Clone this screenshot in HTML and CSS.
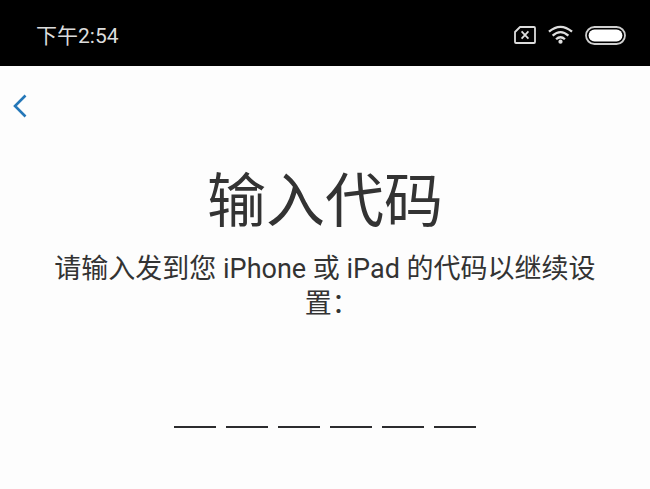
FILE: index.html
```html
<!DOCTYPE html>
<html lang="zh-CN">
<head>
    <meta charset="UTF-8"/>
    <meta name="viewport" content="width=device-width, initial-scale=1.0"/>
    <title>输入代码</title>
    <link rel="stylesheet" href="styles.css">
</head>
<body>
<div class="status-bar">
    <span class="time">下午2:54</span>
    <div class="status-icons">
        <svg class="sim-icon" width="22" height="18" viewBox="0 0 22 18" fill="none" stroke="#dcdcdc" stroke-width="1.8" stroke-linejoin="round">
            <path d="M6 1H20Q21 1 21 2V16Q21 17 20 17H2Q1 17 1 16V6Z"/>
            <path d="M7.6 5.4L14.4 12.6M14.4 5.4L7.6 12.6"/>
        </svg>
        <svg class="wifi-icon" width="25" height="20" viewBox="0 0 26 20" fill="none" stroke="#dedede" stroke-width="2.4">
            <path d="M1 6.5Q13 -3.5 25 6.5"/>
            <path d="M4.8 10.6Q13 3.4 21.2 10.6"/>
            <path d="M8.4 14.4Q13 10.2 17.6 14.4"/>
            <circle cx="13" cy="17" r="2.2" fill="#dedede" stroke="none"/>
        </svg>
        <svg class="battery-icon" width="41" height="19" viewBox="0 0 41 19">
            <rect x="1" y="1" width="39" height="17" rx="8.5" fill="none" stroke="#cfcfcf" stroke-width="1.8"/>
            <rect x="3.6" y="3.6" width="33.8" height="11.8" rx="5.9" fill="#fff"/>
        </svg>
    </div>
</div>

<nav class="nav-bar">
    <a href="#" class="back-link" aria-label="返回">
        <svg width="14" height="24" viewBox="0 0 14 24" fill="none" stroke="#2477b8" stroke-width="2.6">
            <path d="M12.5 1.5L2 12L12.5 22.5"/>
        </svg>
    </a>
</nav>

<main class="container">
    <h1>输入代码</h1>
    <p class="message">请输入发到您 iPhone 或 iPad 的代码以继续设置：</p>
    <form class="code-form">
        <input type="text" inputmode="numeric" maxlength="1" aria-label="第 1 位"/>
        <input type="text" inputmode="numeric" maxlength="1" aria-label="第 2 位"/>
        <input type="text" inputmode="numeric" maxlength="1" aria-label="第 3 位"/>
        <input type="text" inputmode="numeric" maxlength="1" aria-label="第 4 位"/>
        <input type="text" inputmode="numeric" maxlength="1" aria-label="第 5 位"/>
        <input type="text" inputmode="numeric" maxlength="1" aria-label="第 6 位"/>
    </form>
</main>
</body>
</html>
```

FILE: styles.css
```css
body {
    margin: 0;
    background-color: #fdfdfd;
    color: #333;
    font-family: Roboto, "Noto Sans CJK SC", sans-serif;
}
.status-bar {
    display: flex;
    justify-content: space-between;
    align-items: center;
    height: 66px;
    padding: 4px 24px 0 36px;
    box-sizing: border-box;
    background-color: #000;
    color: #dcdcdc;
}
.time {
    padding-top: 2px;
    font-size: 21px;
    line-height: 28px;
}
.status-icons {
    display: flex;
    align-items: center;
    gap: 12px;
}
.nav-bar {
    display: flex;
    align-items: center;
    height: 80px;
    padding: 0 13px;
}
.back-link {
    display: flex;
}
.container {
    padding: 18px 48px;
    text-align: center;
}
h1 {
    margin: 0;
    font-size: 59px;
    line-height: 76px;
    font-weight: normal;
}
.message {
    margin: 12px 0 0;
    font-size: 27px;
    line-height: 35px;
    /* half-width punctuation, so the colon does not push the last line left */
    font-feature-settings: "halt";
}
.code-form {
    display: flex;
    justify-content: center;
    gap: 10px;
    margin-top: 58px;
}
.code-form input {
    width: 42px;
    height: 48px;
    padding: 0;
    box-sizing: border-box;
    border: none;
    border-bottom: 2px solid #2c2c2e;
    border-radius: 0;
    background: none;
    color: #333;
    font-family: inherit;
    font-size: 32px;
    text-align: center;
}
.code-form input:focus {
    outline: none;
    border-bottom-color: #2477b8;
}
```
